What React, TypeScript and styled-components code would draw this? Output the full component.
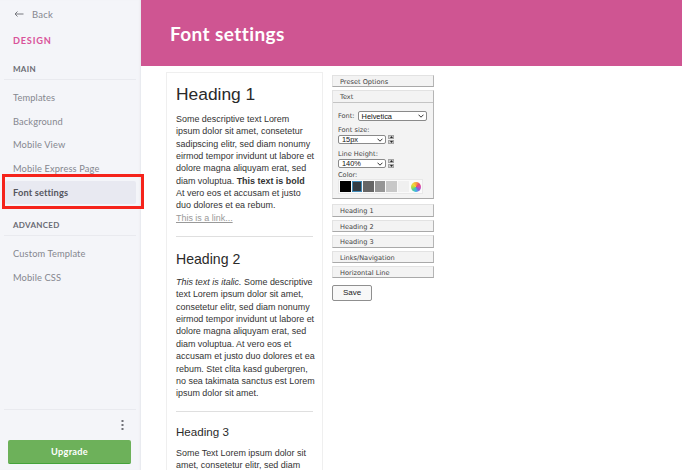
import React from "react";
import styled, { createGlobalStyle } from "styled-components";

const Global = createGlobalStyle`
  html, body { margin: 0; padding: 0; height: 100%; overflow: hidden; background: #fff; }
  #root { height: 100%; }
`;

const Page = styled.div`
  display: flex;
  width: 682px;
  height: 470px;
  overflow: hidden;
  font-family: "Lato", sans-serif;
`;

const Sidebar = styled.aside`
  position: relative;
  flex: 0 0 141px;
  display: flex;
  flex-direction: column;
  background: #f4f5f9;
  box-shadow: inset -2px 0 2px -1px #e6e7ec;
  padding: 0 5px 0 4px;
  box-sizing: border-box;
`;

const BackRow = styled.div`
  display: flex;
  align-items: center;
  gap: 8px;
  height: 14px;
  margin: 7px 0 0 10px;
  font-size: 9.5px;
  color: #85878f;
  letter-spacing: 0.2px;
`;

const Brand = styled.div`
  margin: 14px 0 0 9px;
  font-size: 9.2px;
  line-height: 12px;
  font-weight: 700;
  letter-spacing: 0.8px;
  color: #d9539a;
`;

const SectionTitle = styled.div<{ $top: number }>`
  margin: ${(p) => p.$top}px 0 0 0;
  padding: 0 0 4px 9px;
  border-bottom: 1px solid #e9eaef;
  font-size: 8px;
  line-height: 11px;
  font-weight: 700;
  letter-spacing: 0.3px;
  color: #6a6b73;
`;

const NavList = styled.nav<{ $top: number }>`
  display: flex;
  flex-direction: column;
  margin-top: ${(p) => p.$top}px;
`;

const NavItem = styled.div<{ $active?: boolean }>`
  height: 23.7px;
  line-height: 23.7px;
  padding-left: ${(p) => (p.$active ? 8 : 9)}px;
  margin-left: ${(p) => (p.$active ? 1 : 0)}px;
  border-radius: 2px;
  font-size: 9.3px;
  letter-spacing: 0.12px;
  font-weight: ${(p) => (p.$active ? 700 : 400)};
  color: ${(p) => (p.$active ? "#55565e" : "#85878f")};
  background: ${(p) => (p.$active ? "#e8e9f1" : "transparent")};
`;

const SideFooter = styled.div`
  margin-top: auto;
  border-top: 1px solid #e9eaef;
  display: flex;
  flex-direction: column;
  padding-bottom: 6px;
`;

const MoreRow = styled.div`
  display: flex;
  justify-content: flex-end;
  align-items: center;
  height: 30px;
  padding-right: 12px;
`;

const UpgradeButton = styled.div`
  margin: 0 5px 0 4px;
  height: 24px;
  line-height: 23px;
  box-sizing: border-box;
  background: #6db15a;
  border-bottom: 1px solid #44a33a;
  border-radius: 2px;
  color: #fff;
  text-align: center;
  font-size: 9.2px;
  font-weight: 700;
  letter-spacing: 0.3px;
`;

const Highlight = styled.div`
  position: absolute;
  left: 2px;
  top: 174px;
  width: 142px;
  height: 35px;
  box-sizing: border-box;
  border: 3px solid #f5231b;
  z-index: 2;
`;

const Main = styled.main`
  flex: 1;
  display: flex;
  flex-direction: column;
  min-width: 0;
`;

const Header = styled.header`
  height: 66px;
  flex: none;
  background: #cf5592;
  color: #fff;
  display: flex;
  align-items: center;
  padding-left: 29px;
  font-size: 19px;
  font-weight: 700;
  letter-spacing: 0.4px;
`;

const Content = styled.div`
  display: flex;
  align-items: flex-start;
  gap: 9px;
  padding: 6px 0 0 25px;
`;

const Preview = styled.section`
  width: 157px;
  height: 398px;
  box-sizing: border-box;
  border: 1px solid #efefef;
  border-bottom: none;
  padding: 0 9px;
  font-family: "Liberation Sans", Arial, sans-serif;
  color: #2a2a2a;
  overflow: hidden;
`;

const H1 = styled.h1`
  margin: 11px 0 0;
  font-size: 17.4px;
  line-height: 21px;
  font-weight: 400;
`;

const H2 = styled.h2`
  margin: 13px 0 0;
  font-size: 14.1px;
  line-height: 18px;
  font-weight: 400;
`;

const H3 = styled.h3`
  margin: 12px 0 0;
  font-size: 11.6px;
  line-height: 15px;
  font-weight: 400;
`;

const Para = styled.p<{ $top: number }>`
  margin: ${(p) => p.$top}px 0 0;
  font-size: 8.95px;
  line-height: 12.35px;
  color: #333;
  white-space: nowrap;
`;

const SampleLink = styled.a`
  color: #999;
  text-decoration: underline;
`;

const Rule = styled.hr<{ $top: number }>`
  border: none;
  border-top: 1px solid #dfdfdf;
  margin: ${(p) => p.$top}px 0 0;
`;

const Options = styled.div`
  width: 102px;
  display: flex;
  flex-direction: column;
  font-family: "DejaVu Sans", Verdana, sans-serif;
  font-size: 6.6px;
  color: #444;
`;

const Bar = styled.div<{ $gap?: number }>`
  height: 12.4px;
  line-height: 12.5px;
  box-sizing: border-box;
  padding-left: 7px;
  margin-top: ${(p) => p.$gap ?? 3}px;
  background: #f3f3f3;
  border: 1px solid;
  border-color: #e2e2e2 #b5b5b5 #a9a9a9 #e2e2e2;
`;

const OpenPanel = styled.div`
  margin-top: 3px;
  background: #f3f3f3;
  border: 1px solid;
  border-color: #e2e2e2 #b5b5b5 #a9a9a9 #e2e2e2;
  height: 109px;
  box-sizing: border-box;
`;

const PanelHead = styled.div`
  height: 11px;
  line-height: 12.5px;
  box-sizing: content-box;
  padding-left: 7px;
  border-bottom: 1px solid #c4c4c4;
`;

const PanelBody = styled.div`
  padding: 8px 0 0 5px;
  display: flex;
  flex-direction: column;
`;

const FontRow = styled.div`
  display: flex;
  align-items: center;
  gap: 3px;
`;

const FieldLabel = styled.div<{ $top: number; $bottom?: number }>`
  margin: ${(p) => p.$top}px 0 ${(p) => p.$bottom ?? 0}px;
  height: 9px;
  line-height: 9px;
`;

const SelectRow = styled.div`
  display: flex;
  align-items: center;
  gap: 2px;
`;

const SelectBox = styled.div<{ $w: number; $h: number }>`
  width: ${(p) => p.$w}px;
  height: ${(p) => p.$h}px;
  box-sizing: border-box;
  border: 1px solid #8a8a8a;
  border-radius: 2px;
  background: #fff;
  display: flex;
  align-items: center;
  justify-content: space-between;
  padding: 0 2px 0 3px;
  font-family: "Liberation Sans", Arial, sans-serif;
  font-size: 7.4px;
  color: #111;
`;

const Stepper = styled.div`
  display: flex;
  flex-direction: column;
  gap: 0.5px;
`;

const Step = styled.div`
  width: 6px;
  height: 4.5px;
  background: #d0d0d0;
  border: 0.5px solid #a5a5a5;
  box-sizing: border-box;
  display: flex;
  align-items: center;
  justify-content: center;
`;

const Swatches = styled.div`
  display: flex;
  align-items: center;
  gap: 1.1px;
  width: 85px;
  height: 15px;
  padding: 0 1px;
  box-sizing: border-box;
  background: #fafafa;
  border: 1px solid #e8e8e8;
`;

const Swatch = styled.div<{ $c: string; $on?: boolean }>`
  width: 10.7px;
  height: 11px;
  box-sizing: border-box;
  background: ${(p) => p.$c};
  border: ${(p) => (p.$on ? "1px solid #3f88b5" : "none")};
`;

const Wheel = styled.div`
  width: 10px;
  height: 10px;
  margin-left: 1.5px;
  border-radius: 50%;
  background: conic-gradient(#f7a83c, #ee4f6a, #d24bb4, #8a5fd8, #3fb4e8, #4fcf9e, #b6dc3f, #f7d63c, #f7a83c);
`;

const SaveButton = styled.div`
  margin-top: 7px;
  width: 40px;
  height: 16px;
  line-height: 14px;
  box-sizing: border-box;
  text-align: center;
  border: 1px solid #8f8f8f;
  border-radius: 2px;
  background: #f8f8f8;
  color: #222;
  font-family: "Liberation Sans", Arial, sans-serif;
  font-size: 8px;
`;

const Chevron = () => (
  <svg width="6" height="4" viewBox="0 0 6 4" fill="none" stroke="#333" strokeWidth="1">
    <path d="M0.5 0.7 L3 3.2 L5.5 0.7" />
  </svg>
);

const Spinner = () => (
  <Stepper>
    <Step>
      <svg width="3" height="2" viewBox="0 0 3 2"><path d="M1.5 0 L3 2 H0 Z" fill="#222" /></svg>
    </Step>
    <Step>
      <svg width="3" height="2" viewBox="0 0 3 2"><path d="M0 0 H3 L1.5 2 Z" fill="#222" /></svg>
    </Step>
  </Stepper>
);

const swatches = ["#000000", "#333c44", "#666666", "#969696", "#c8c8c8", "#f0f0f0"];

export default function App() {
  return (
    <Page>
      <Global />
      <Sidebar>
        <BackRow>
          <svg width="10" height="8" viewBox="0 0 10 8" fill="none" stroke="#77797f" strokeWidth="1">
            <path d="M9.5 4 H1 M3.5 1.5 L1 4 L3.5 6.5" />
          </svg>
          <span>Back</span>
        </BackRow>
        <Brand>DESIGN</Brand>
        <SectionTitle $top={17}>MAIN</SectionTitle>
        <NavList $top={6}>
          <NavItem>Templates</NavItem>
          <NavItem>Background</NavItem>
          <NavItem>Mobile View</NavItem>
          <NavItem>Mobile Express Page</NavItem>
          <NavItem $active>Font settings</NavItem>
        </NavList>
        <SectionTitle $top={16}>ADVANCED</SectionTitle>
        <NavList $top={6}>
          <NavItem>Custom Template</NavItem>
          <NavItem>Mobile CSS</NavItem>
        </NavList>
        <SideFooter>
          <MoreRow>
            <svg width="3" height="10" viewBox="0 0 3 10" fill="#6f7077">
              <rect x="0.5" y="0" width="2" height="2" />
              <rect x="0.5" y="4" width="2" height="2" />
              <rect x="0.5" y="8" width="2" height="2" />
            </svg>
          </MoreRow>
          <UpgradeButton>Upgrade</UpgradeButton>
        </SideFooter>
        <Highlight />
      </Sidebar>
      <Main>
        <Header>Font settings</Header>
        <Content>
          <Preview>
            <H1>Heading 1</H1>
            <Para $top={8}>
              Some descriptive text Lorem<br />
              ipsum dolor sit amet, consetetur<br />
              sadipscing elitr, sed diam nonumy<br />
              eirmod tempor invidunt ut labore et<br />
              dolore magna aliquyam erat, sed<br />
              diam voluptua. <b>This text is bold</b><br />
              At vero eos et accusam et justo<br />
              duo dolores et ea rebum.<br />
              <SampleLink>This is a link...</SampleLink>
            </Para>
            <Rule $top={12} />
            <H2>Heading 2</H2>
            <Para $top={8}>
              <i>This text is italic.</i> Some descriptive<br />
              text Lorem ipsum dolor sit amet,<br />
              consetetur elitr, sed diam nonumy<br />
              eirmod tempor invidunt ut labore et<br />
              dolore magna aliquyam erat, sed<br />
              diam voluptua. At vero eos et<br />
              accusam et justo duo dolores et ea<br />
              rebum. Stet clita kasd gubergren,<br />
              no sea takimata sanctus est Lorem<br />
              ipsum dolor sit amet.
            </Para>
            <Rule $top={11} />
            <H3>Heading 3</H3>
            <Para $top={8}>
              Some Text Lorem ipsum dolor sit<br />
              amet, consetetur elitr, sed diam
            </Para>
          </Preview>
          <Options>
            <Bar $gap={3}>Preset Options</Bar>
            <OpenPanel>
              <PanelHead>Text</PanelHead>
              <PanelBody>
                <FontRow>
                  Font:
                  <SelectBox $w={69} $h={10}>Helvetica<Chevron /></SelectBox>
                </FontRow>
                <FieldLabel $top={4.5}>Font size:</FieldLabel>
                <SelectRow>
                  <SelectBox $w={48} $h={9}>15px<Chevron /></SelectBox>
                  <Spinner />
                </SelectRow>
                <FieldLabel $top={5.5}>Line Height:</FieldLabel>
                <SelectRow>
                  <SelectBox $w={48} $h={9}>140%<Chevron /></SelectBox>
                  <Spinner />
                </SelectRow>
                <FieldLabel $top={3} $bottom={-1}>Color:</FieldLabel>
                <Swatches>
                  {swatches.map((c, i) => (
                    <Swatch key={c} $c={c} $on={i === 1} />
                  ))}
                  <Wheel />
                </Swatches>
              </PanelBody>
            </OpenPanel>
            <Bar $gap={5}>Heading 1</Bar>
            <Bar>Heading 2</Bar>
            <Bar>Heading 3</Bar>
            <Bar>Links/Navigation</Bar>
            <Bar>Horizontal Line</Bar>
            <SaveButton>Save</SaveButton>
          </Options>
        </Content>
      </Main>
    </Page>
  );
}
